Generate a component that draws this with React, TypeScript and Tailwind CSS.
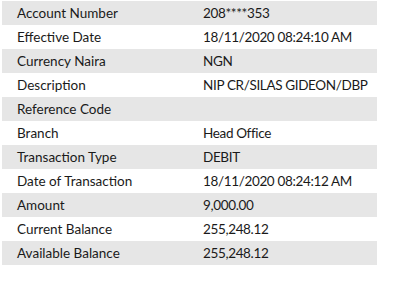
import React from "react";

const rows: [string, string][] = [
    ["Account Number", "208****353"],
    ["Effective Date", "18/11/2020 08:24:10 AM"],
    ["Currency Naira", "NGN"],
    ["Description", "NIP CR/SILAS GIDEON/DBP"],
    ["Reference Code", ""],
    ["Branch", "Head Office"],
    ["Transaction Type", "DEBIT"],
    ["Date of Transaction", "18/11/2020 08:24:12 AM"],
    ["Amount", "9,000.00"],
    ["Current Balance", "255,248.12"],
    ["Available Balance", "255,248.12"],
];

export default function App() {
    return (
        <div className="w-[407px] h-[283px] bg-white pt-[1px] pl-[2px]" style={{ fontFamily: "Lato, sans-serif" }}>
            <div className="w-[375px] flex flex-col">
                {rows.map(([label, value], i) => (
                    <div
                        key={label}
                        className={`h-[24px] flex items-center whitespace-nowrap text-[13.5px] text-[#1a1a1a] ${i % 2 === 0 ? "bg-[#e6e6e6]" : "bg-white"}`}
                    >
                        <div className="w-[201px] pl-[15px]">{label}</div>
                        <div className="tracking-[-0.35px]">{value}</div>
                    </div>
                ))}
            </div>
        </div>
    );
}
